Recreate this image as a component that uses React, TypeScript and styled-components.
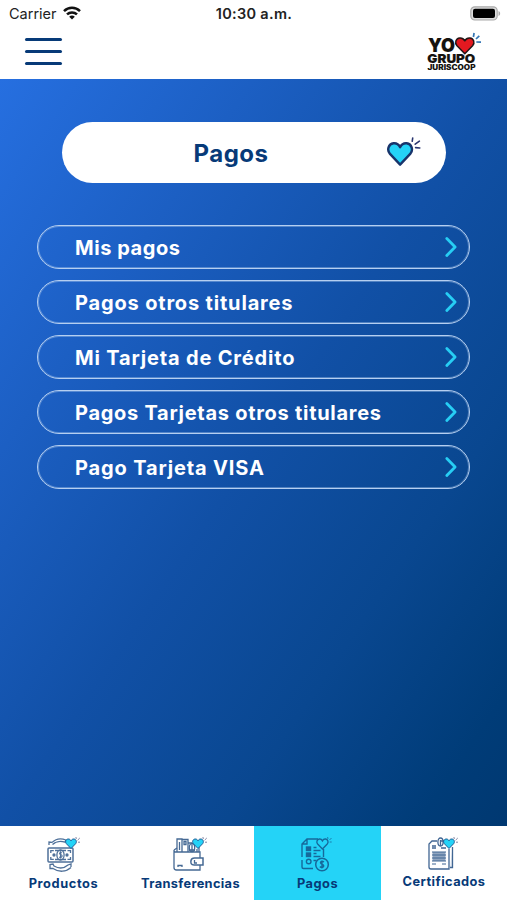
import React from 'react';
import styled, { createGlobalStyle } from 'styled-components';

const NAVY = '#073a78';
const CYAN = '#24d3f7';

const Global = createGlobalStyle`
  *, *::before, *::after { box-sizing: border-box; }
  body { margin: 0; background: #fff; font-family: Inter, "Liberation Sans", sans-serif; }
`;

const Screen = styled.div`
  width: 507px;
  height: 900px;
  display: flex;
  flex-direction: column;
  overflow: hidden;
  background: #fff;
`;

const StatusBar = styled.div`
  height: 28px;
  flex: none;
  display: grid;
  grid-template-columns: 1fr auto 1fr;
  align-items: center;
  padding: 0 6px 0 9px;
  color: #222;
`;

const Carrier = styled.div`
  display: flex;
  align-items: center;
  gap: 6px;
  font-size: 14.5px;
  line-height: 28px;
  svg { margin-top: -2px; }
`;

const Clock = styled.div`
  font-size: 14.5px;
  font-weight: 600;
  letter-spacing: 0.3px;
  line-height: 28px;
  margin-right: 2px;
`;

const Battery = styled.div`
  display: flex;
  justify-content: flex-end;
  margin-top: -2px;
`;

const Header = styled.header`
  height: 51px;
  flex: none;
  display: flex;
  justify-content: space-between;
  padding: 0 23px 0 25px;
`;

const MenuButton = styled.button`
  width: 37px;
  height: 27px;
  margin-top: 10px;
  padding: 0;
  border: 0;
  background: none;
  display: flex;
  flex-direction: column;
  justify-content: space-between;
`;

const MenuLine = styled.span`
  height: 3px;
  width: 100%;
  border-radius: 2px;
  background: ${NAVY};
`;

const LogoSvg = styled.svg`
  margin-top: 3px;
`;

const Content = styled.main`
  flex: 1;
  display: flex;
  flex-direction: column;
  align-items: center;
  padding-top: 43px;
  background: linear-gradient(to bottom right, #266fe0 0%, #1c5fc3 25%, #1150a6 50%, #094790 72%, #003c78 91%, #003871 100%);
`;

const TitleCard = styled.div`
  width: 384px;
  height: 61px;
  border-radius: 31px;
  background: #fff;
  display: flex;
  align-items: center;
  justify-content: space-between;
  padding: 0 25px 0 132px;
  svg { margin-top: -3px; }
`;

const Title = styled.h1`
  margin: 3px 0 0;
  color: ${NAVY};
  font-size: 24px;
  line-height: 30px;
  font-weight: 700;
  letter-spacing: 0.5px;
`;

const List = styled.div`
  margin-top: 42px;
  display: flex;
  flex-direction: column;
  gap: 11px;
`;

const Row = styled.button`
  width: 433px;
  height: 44px;
  border: 1px solid #b5cff1;
  box-shadow: inset 0 0 0 1px rgba(181, 207, 241, 0.4);
  border-radius: 22px;
  background: none;
  display: flex;
  align-items: center;
  justify-content: space-between;
  padding: 0 11px 0 37px;
  color: #fff;
  font-family: inherit;
`;

const RowLabel = styled.span<{ $track: number }>`
  margin-top: 2px;
  font-size: 20px;
  line-height: 24px;
  font-weight: 700;
  white-space: nowrap;
  letter-spacing: ${(p) => p.$track}px;
`;

const TabBar = styled.nav`
  height: 74px;
  flex: none;
  display: grid;
  grid-template-columns: 127px 127px 127px 126px;
  background: #fff;
`;

const Tab = styled.button<{ $active?: boolean }>`
  border: 0;
  padding: 10px 0 0;
  display: flex;
  flex-direction: column;
  align-items: center;
  background: ${(p) => (p.$active ? CYAN : '#fff')};
  font-family: inherit;
`;

const TabLabel = styled.span<{ $track: number; $lift?: boolean }>`
  margin-top: ${(p) => (p.$lift ? 0 : 2)}px;
  color: ${NAVY};
  font-size: 12.8px;
  line-height: 18px;
  font-weight: 700;
  white-space: nowrap;
  letter-spacing: ${(p) => p.$track}px;
`;

const HEART = 'M12 21 L2.8 11.5 C-.2 8.2 1.3 2.5 6 2 C8.8 1.7 10.8 3.2 12 5.5 C13.2 3.2 15.2 1.7 18 2 C22.7 2.5 24.2 8.2 21.2 11.5 Z';

const WifiIcon = () => (
  <svg width="18" height="14" viewBox="0 0 18 14" fill="none" stroke="#111" strokeWidth="2.5">
    <path d="M1 5.1C5.5.7 12.5.7 17 5.1" />
    <path d="M4 8.4c2.8-2.7 7.2-2.7 10 0" />
    <path d="M9 13.5 6.2 10.7c1.6-1.5 4-1.5 5.6 0Z" fill="#111" stroke="none" />
  </svg>
);

const BatteryIcon = () => (
  <svg width="31" height="15" viewBox="0 0 31 15">
    <rect x=".8" y=".8" width="26.4" height="13.2" rx="4" fill="#ddd" stroke="#aaa" strokeWidth="1.2" />
    <rect x="3" y="2.8" width="22" height="9.2" rx="2" fill="#000" />
    <path d="M28.5 5v5c2.2-.8 2.2-4.2 0-5Z" fill="#aaa" />
  </svg>
);

const Logo = () => (
  <LogoSvg width="57" height="41" viewBox="427 31 57 41">
    <g fill="#16130f" stroke="#16130f" fontFamily="Inter, sans-serif" fontWeight="900">
      <text x="428" y="52" fontSize="18.6" strokeWidth=".1" textLength="27" lengthAdjust="spacingAndGlyphs">YO</text>
      <text x="427.3" y="63.3" fontSize="12.2" strokeWidth=".1" textLength="48" lengthAdjust="spacingAndGlyphs">GRUPO</text>
      <text x="427.5" y="70.1" fontSize="6.9" strokeWidth="0" textLength="48" lengthAdjust="spacingAndGlyphs">JURISCOOP</text>
    </g>
    <path transform="translate(454.6 36.3) scale(.85 .83)" d={HEART} fill="#e31920" stroke="#241515" strokeWidth="1.7" strokeLinejoin="round" />
    <path d="m473.4 37 .7-4M476 39l3.3-3.2M476.3 42l4.7.2" stroke="#3376b5" strokeWidth="1.7" />
  </LogoSvg>
);

const TitleHeart = () => (
  <svg width="34" height="30" viewBox="0 0 34 30" fill="none">
    <path transform="translate(-.1 5.1) scale(1.1 1.12)" d={HEART} fill={CYAN} stroke="#18346b" strokeWidth="2.2" strokeLinejoin="round" />
    <path d="m25.2 5.3.5-3.3M28.2 8.2l4.2-3M28.6 11.6l4.2.4" stroke="#29356f" strokeWidth="1.6" strokeLinecap="round" />
  </svg>
);

const Chevron = () => (
  <svg width="14" height="22" viewBox="0 0 14 22" fill="none">
    <path d="m2.8 2.5 8.3 8.5-8.3 8.5" stroke="#27cef4" strokeWidth="2.8" strokeLinecap="round" strokeLinejoin="round" />
  </svg>
);

const SmallHeart = ({ x, y }: { x: number; y: number }) => (
  <g transform={`translate(${x} ${y})`}>
    <path transform="scale(.5)" d={HEART} fill={CYAN} stroke="#195590" strokeWidth="1.9" />
    <path d="m11.3 1-.4-2M12.6 2.2l2.2-2.2M13 4.2h2" stroke="#63678d" strokeWidth=".8" />
  </g>
);

const ProductsIcon = () => (
  <svg width="36" height="37" viewBox="0 0 36 37" fill="none" stroke="#4f7099" strokeWidth="1.3">
    <path d="M3 9V6l3 .4C10 2.5 15 2 20 4l-1 2.2C14 4.5 9 6 6.5 8.5M25 31v-3l-3 1c-4 3.5-9 3.8-14 1l-1-2-3 .5v4h3c6 4 13 3.6 18-1" />
    <rect x="2" y="12" width="25" height="14" rx="1" strokeWidth="1.5" />
    <path d="M4.8 17v-2.3h3M21.5 14.7h3V17M4.8 21v2.3h3M21.5 23.3h3V21M9 14.5h11M9 23.5h11" />
    <ellipse cx="14.5" cy="19" rx="3.6" ry="5" />
    <path d="M16 17c-2-1.5-3.5.8-1.3 1.6 2.8 1 1 3.7-1.5 2.3M14.5 15.3v7.2" strokeWidth="1.1" />
    <circle cx="8" cy="19" r="1" fill="#315b8c" />
    <circle cx="21" cy="19" r="1" fill="#315b8c" />
    <SmallHeart x={19} y={2} />
  </svg>
);

const WalletIcon = () => (
  <svg width="36" height="37" viewBox="0 0 36 37" fill="none" stroke="#456994" strokeWidth="1.3">
    <path d="M27 22v-6H2.5C1.5 16 1 15 1 14v17.5C1 33 2 34 3.500 34H27V29M1 14l3-2M26 16V11" />
    <path d="M4 16V3h5v13M9 16V3.5h6V16M11 5.5h2v3h-2ZM6.5 6v8M15 16V7h4M24 16v-3" />
    <ellipse cx="19" cy="11.5" rx="2.7" ry="4.2" />
    <path d="M19 8v7M16 14h6M5 31v-1.5h4V31" />
    <path d="M27 22h3v7h-9c-3 0-3.5-2-3-4.500.4-2 1.700-2.500 3.500-2.500Z" strokeWidth="1.5" />
    <path d="M21.5 24v3h2.5" />
    <SmallHeart x={19} y={2} />
  </svg>
);

const PaymentsIcon = () => (
  <svg width="36" height="37" viewBox="0 0 36 37" fill="none" stroke="#16699b" strokeWidth="1.4">
    <path d="M18 3H7L2 8v13M2 24v7c0 1 .5 1.5 1.5 1.5H13M23.5 13v8M2 8h5V3" />
    <rect x="6.5" y="11" width="4" height="3.5" fill="#16699b" />
    <rect x="6.5" y="17" width="4" height="3.5" fill="#16699b" />
    <path d="M13.5 11.5h3M13.5 14.5h7M13.5 17.5h3M13.5 20.5h7M13.5 24.5h3" />
    <circle cx="8.7" cy="25.5" r="2.3" />
    <circle cx="22" cy="28.5" r="6.3" strokeWidth="1.5" />
    <path d="M24 26c-3-2-5 .8-2 2.2 3.7 1.5.7 4.5-2.2 2.5M22 24.5v8" />
    <path transform="translate(16.2 2) scale(.52)" d={HEART} strokeWidth="2.6" />
    <path d="m28 3-.4-2M29.5 4l2-2M29.7 6h2" strokeWidth=".8" />
  </svg>
);

const CertificatesIcon = () => (
  <svg width="36" height="37" viewBox="0 0 36 37" fill="none" stroke="#416693" strokeWidth="1.3">
    <path d="M24 31.5h2.5V11" fill="#dce4ee" />
    <path d="M11 5H6L3 8v23c0 1.2.5 2 2 2h18V13M18 5h-3" />
    <ellipse cx="14.5" cy="6" rx="2.6" ry="4" />
    <path d="M14.5 4v6M6 10h4M6 12h4M15 12h5" />
    <rect x="6.5" y="16" width="13" height="9" fill="#91a6c1" stroke="none" />
    <path d="M6 16h14M6 19h14M6 22h14M6 25h14M6 28h4M16 28h4" strokeWidth="1.2" />
    <SmallHeart x={17} y={2} />
  </svg>
);

const items = [
  { label: 'Mis pagos', track: 0.55 },
  { label: 'Pagos otros titulares', track: 0.83 },
  { label: 'Mi Tarjeta de Crédito', track: 0.83 },
  { label: 'Pagos Tarjetas otros titulares', track: 0.72 },
  { label: 'Pago Tarjeta VISA', track: 0.85 },
];

const tabs = [
  { label: 'Productos', track: 0.6, Icon: ProductsIcon },
  { label: 'Transferencias', track: 0.35, Icon: WalletIcon },
  { label: 'Pagos', track: 0.5, Icon: PaymentsIcon, active: true },
  { label: 'Certificados', track: 0.45, Icon: CertificatesIcon, lift: true },
];

export default function App() {
  return (
    <>
      <Global />
      <Screen>
        <StatusBar>
          <Carrier>Carrier <WifiIcon /></Carrier>
          <Clock>10:30 a.m.</Clock>
          <Battery><BatteryIcon /></Battery>
        </StatusBar>
        <Header>
          <MenuButton aria-label="Menú"><MenuLine /><MenuLine /><MenuLine /></MenuButton>
          <Logo />
        </Header>
        <Content>
          <TitleCard>
            <Title>Pagos</Title>
            <TitleHeart />
          </TitleCard>
          <List>
            {items.map((item) => (
              <Row key={item.label}>
                <RowLabel $track={item.track}>{item.label}</RowLabel>
                <Chevron />
              </Row>
            ))}
          </List>
        </Content>
        <TabBar>
          {tabs.map(({ label, track, Icon, active, lift }) => (
            <Tab key={label} $active={active}>
              <Icon />
              <TabLabel $track={track} $lift={lift}>{label}</TabLabel>
            </Tab>
          ))}
        </TabBar>
      </Screen>
    </>
  );
}
